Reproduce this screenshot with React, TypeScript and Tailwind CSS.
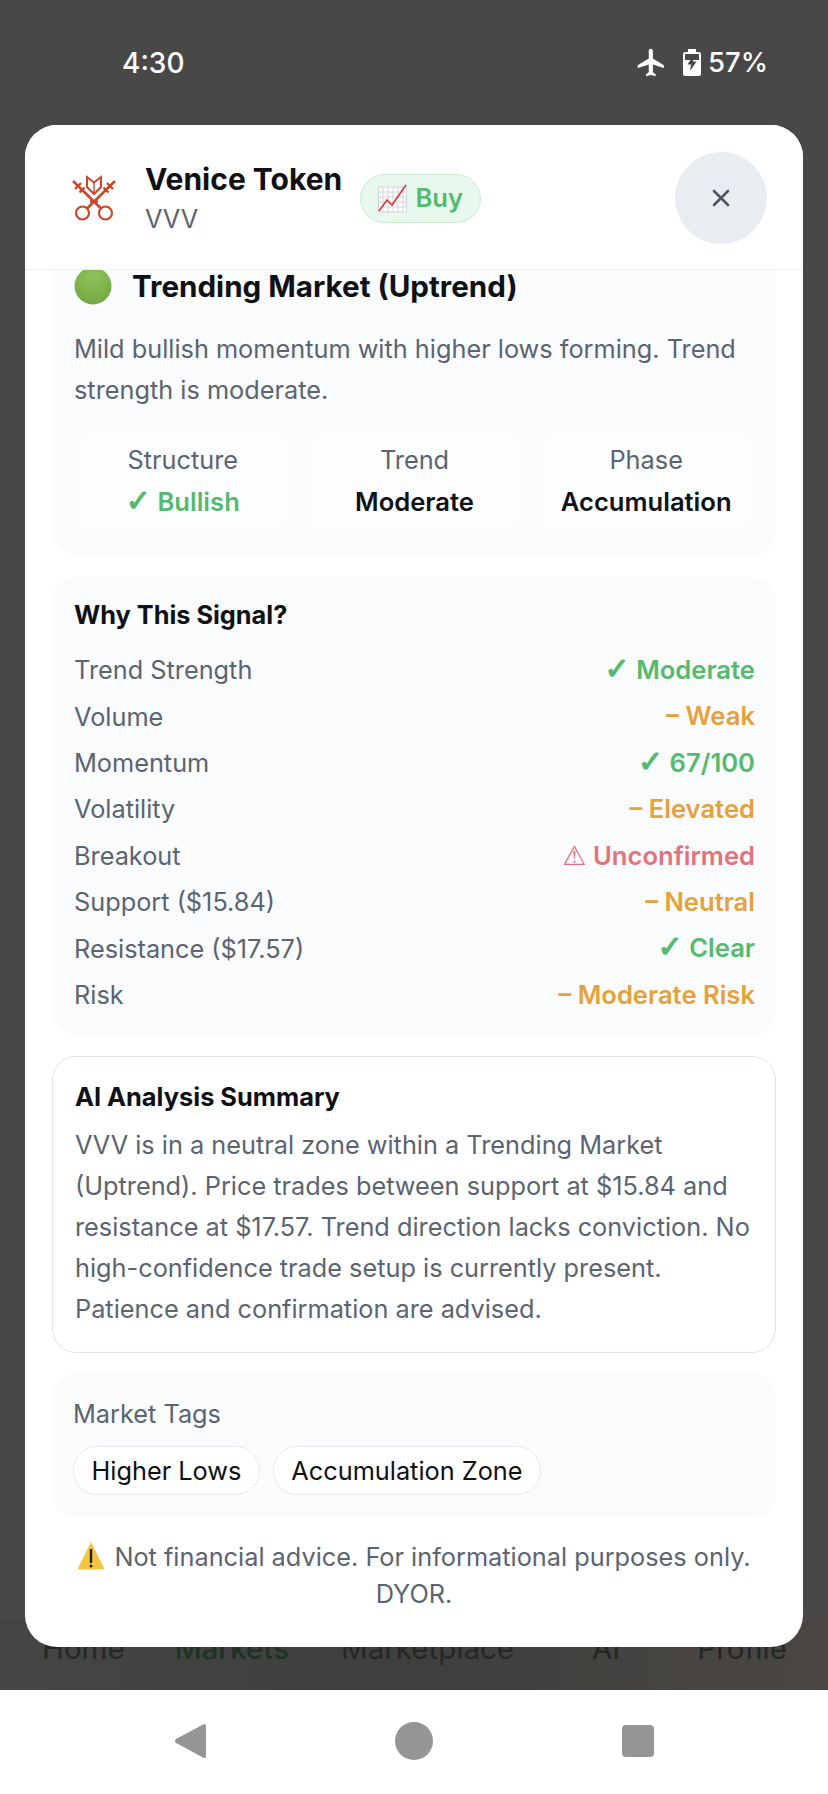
const SIGNALS = [
  { label: "Trend Strength", mark: "✓", value: "Moderate", color: "text-[#56ba6e]" },
  { label: "Volume", mark: "–", value: "Weak", color: "text-[#e3a23c]" },
  { label: "Momentum", mark: "✓", value: "67/100", color: "text-[#56ba6e]" },
  { label: "Volatility", mark: "–", value: "Elevated", color: "text-[#e3a23c]" },
  { label: "Breakout", mark: "⚠", value: "Unconfirmed", color: "text-[#e2727b]" },
  { label: "Support ($15.84)", mark: "–", value: "Neutral", color: "text-[#e3a23c]" },
  { label: "Resistance ($17.57)", mark: "✓", value: "Clear", color: "text-[#56ba6e]" },
  { label: "Risk", mark: "–", value: "Moderate Risk", color: "text-[#e3a23c]" },
];

function KeysLogo() {
  return (
    <svg width="46" height="47" viewBox="0 0 46 47" fill="none" stroke="#c9472a" strokeWidth="2.2">
      {/* bows */}
      <circle cx="11.5" cy="39" r="6.5" />
      <circle cx="34.5" cy="39" r="6.5" />
      {/* shafts */}
      <path d="M2 7 L30 34.5 M44 7 L16 34.5" strokeWidth="2.6" />
      <path d="M19 27.5 H27" strokeWidth="2.4" />
      {/* wards */}
      <path d="M4 15 L10 9 M8.5 18.5 L13.5 13.5" strokeWidth="2.4" />
      <path d="M42 15 L36 9 M37.5 18.5 L32.5 13.5" strokeWidth="2.4" />
      {/* tulip */}
      <path d="M23 20 L16 13 V3 L23 8.5 L30 3 V13 Z" strokeWidth="2" />
      <path d="M23 9 V19" strokeWidth="1.4" />
    </svg>
  );
}

function ChartEmoji() {
  return (
    <svg width="30" height="29" viewBox="0 0 30 29">
      <rect x="0.5" y="3" width="28" height="25" fill="#fbfbfb" stroke="#c9ccd0" strokeWidth="0.8" />
      <path
        d="M5 3V28M10 3V28M15 3V28M20 3V28M25 3V28M0 8H29M0 13H29M0 18H29M0 23H29"
        stroke="#c9ccd0"
        strokeWidth="0.7"
      />
      <path d="M1 27 L9 16 L14 21 L28 1" fill="none" stroke="#d13a45" strokeWidth="1.6" />
    </svg>
  );
}

function GreenDot() {
  return (
    <svg width="38" height="38" viewBox="0 0 38 38" className="shrink-0">
      <defs>
        <radialGradient id="dot" cx="50%" cy="25%" r="75%">
          <stop offset="0%" stopColor="#8fc25a" />
          <stop offset="100%" stopColor="#74a843" />
        </radialGradient>
      </defs>
      <circle cx="19" cy="18" r="18.5" fill="url(#dot)" />
    </svg>
  );
}

function WarningEmoji() {
  return (
    <svg width="28" height="29" viewBox="0 0 28 29" className="inline-block align-[-4px] mr-[9px]">
      <path d="M14 1 L27 27 Q27.5 28.5 26 28.5 H2 Q0.5 28.5 1 27 Z" fill="#f4c542" />
      <path d="M14 9 V21" stroke="#222" strokeWidth="2.4" strokeLinecap="round" />
      <circle cx="14" cy="25" r="1.5" fill="#222" />
    </svg>
  );
}

// check / warning glyphs come from DejaVu, Inter's are too small
function Mark({ children }: { children: string }) {
  if (children === "⚠") {
    return <span className="font-['DejaVu_Sans'] font-normal text-[27px] leading-none">{children}</span>;
  }
  return (
    <span className="font-['DejaVu_Sans'] text-[30px] leading-none [-webkit-text-stroke:1.2px_currentColor]">
      {children}
    </span>
  );
}

export default function App() {
  return (
    <div className="w-[828px] h-[1794px] flex flex-col overflow-hidden bg-[#484849] font-['Inter',sans-serif]">
      {/* Status bar */}
      <div className="h-[125px] pl-[122px] pr-[60px] flex items-center justify-between text-white">
        <span className="text-[28px] font-medium">4:30</span>
        <div className="flex items-center">
          <svg width="33" height="33" viewBox="0 0 24 24" fill="white">
            <path d="M21 16v-2l-8-5V3.5C13 2.67 12.33 2 11.5 2S10 2.67 10 3.5V9l-8 5v2l8-2.5V19l-2 1.5V22l3.5-1 3.5 1v-1.5L13 19v-5.5z" />
          </svg>
          <svg width="18" height="27" viewBox="0 0 18 27" className="ml-[15px]">
            <path d="M5 0h8v3h3a2 2 0 0 1 2 2v20a2 2 0 0 1-2 2H2a2 2 0 0 1-2-2V5a2 2 0 0 1 2-2h3z" fill="white" />
            <rect x="2" y="5" width="14" height="6" fill="#484849" />
            <path d="M10.5 6 L4.5 15.5 H8 L7 22 L13.5 12.5 H10 Z" fill="#484849" />
          </svg>
          <span className="ml-[7px] text-[27.5px] font-medium">57%</span>
        </div>
      </div>

      {/* Modal */}
      <div className="relative z-10 mx-[25px] h-[1522px] shrink-0 rounded-[32px] bg-white flex flex-col overflow-hidden">
        <header className="h-[145px] shrink-0 border-b border-[#eef0f2] bg-white flex items-center pl-[46px] pr-[36px]">
          <KeysLogo />
          <div className="ml-[28px] mt-[1px]">
            <div className="text-[30px] leading-[40px] font-bold text-[#0f1115]">Venice Token</div>
            <div className="text-[25.3px] leading-[36px] mt-[2px] text-[#5b6470]">VVV</div>
          </div>
          <div className="ml-[18px] mt-[3px] h-[49px] w-[121px] rounded-full border border-[#c9ecd3] bg-[#e9f8ed] flex items-center justify-center gap-[7px]">
            <ChartEmoji />
            <span className="text-[25.6px] font-semibold text-[#56ba6e]">Buy</span>
          </div>
          <button className="ml-auto mt-[2px] w-[92px] h-[92px] rounded-full bg-[#e9edf1] flex items-center justify-center">
            <svg width="20" height="20" viewBox="0 0 20 20" stroke="#4b5563" strokeWidth="2.6" strokeLinecap="round">
              <path d="M3 3 L17 17 M17 3 L3 17" />
            </svg>
          </button>
        </header>

        <div className="flex-1 min-h-0 overflow-hidden px-[27px] flex flex-col">
          {/* Market regime */}
          <section className="h-[285px] shrink-0 rounded-b-[24px] bg-[#f9fbfd] pl-[22px] pr-[21px]">
            <div className="flex items-center h-[33px]">
              <GreenDot />
              <h2 className="ml-[20px] text-[29.6px] leading-[33px] font-bold text-[#0f1115] whitespace-nowrap">
                Trending Market (Uptrend)
              </h2>
            </div>
            <p className="mt-[25px] text-[25.3px] leading-[41px] text-[#5b6470]">
              Mild bullish momentum with higher lows forming. Trend strength is moderate.
            </p>
            <div className="mt-[21px] px-[1px] grid grid-cols-3 gap-[16px]">
              <div className="h-[100px] rounded-[20px] bg-[#fcfdfe] flex flex-col items-center justify-center">
                <span className="text-[25.3px] leading-[42px] text-[#5b6470]">Structure</span>
                <span className="text-[25.6px] leading-[42px] font-semibold text-[#56ba6e]">
                  <Mark>✓</Mark> Bullish
                </span>
              </div>
              <div className="h-[100px] rounded-[20px] bg-[#fcfdfe] flex flex-col items-center justify-center">
                <span className="text-[25.3px] leading-[42px] text-[#5b6470]">Trend</span>
                <span className="text-[25.6px] leading-[42px] font-semibold text-[#0f1115]">Moderate</span>
              </div>
              <div className="h-[100px] rounded-[20px] bg-[#fcfdfe] flex flex-col items-center justify-center">
                <span className="text-[25.3px] leading-[42px] text-[#5b6470]">Phase</span>
                <span className="text-[25.6px] leading-[42px] font-semibold text-[#0f1115]">Accumulation</span>
              </div>
            </div>
          </section>

          {/* Why this signal */}
          <section className="mt-[22px] h-[458px] shrink-0 rounded-[24px] bg-[#f9fbfd] pl-[22px] pr-[21px] pt-[18px]">
            <h3 className="text-[25.3px] leading-[40px] font-bold text-[#0f1115]">Why This Signal?</h3>
            <div className="mt-[12px] flex flex-col">
              {SIGNALS.map((row) => (
                <div key={row.label} className="h-[46.4px] flex items-center justify-between text-[25.6px]">
                  <span className="text-[25.3px] text-[#5b6470]">{row.label}</span>
                  <span className={`font-semibold ${row.color}`}>
                    {row.mark === "–" ? row.mark : <Mark>{row.mark}</Mark>} {row.value}
                  </span>
                </div>
              ))}
            </div>
          </section>

          {/* AI summary */}
          <section className="mt-[21px] h-[297px] shrink-0 rounded-[24px] border border-[#dfe4ea] bg-white px-[22px] pt-[20px]">
            <h3 className="text-[25.4px] leading-[40px] font-bold text-[#0f1115]">AI Analysis Summary</h3>
            <p className="mt-[7px] text-[25.3px] leading-[41px] text-[#5b6470]">
              VVV is in a neutral zone within a Trending Market (Uptrend). Price trades between support at $15.84 and
              resistance at $17.57. Trend direction lacks conviction. No high-confidence trade setup is currently
              present. Patience and confirmation are advised.
            </p>
          </section>

          {/* Market tags */}
          <section className="mt-[21px] h-[143px] shrink-0 rounded-[24px] bg-[#f9fbfd] px-[21px] pt-[20px]">
            <div className="text-[25.3px] leading-[40px] text-[#5b6470]">Market Tags</div>
            <div className="mt-[12px] flex gap-[13px]">
              <span className="h-[49px] px-[17.5px] rounded-full border border-[#e6e9ee] bg-white flex items-center text-[25.3px] text-[#0f1115]">
                Higher Lows
              </span>
              <span className="h-[49px] px-[17.5px] rounded-full border border-[#e6e9ee] bg-white flex items-center text-[25.3px] text-[#0f1115]">
                Accumulation Zone
              </span>
            </div>
          </section>

          <p className="mt-[21px] text-center text-[25.3px] leading-[37px] text-[#5b6470]">
            <WarningEmoji />
            Not financial advice. For informational purposes only. DYOR.
          </p>
        </div>
      </div>

      {/* Tab bar peeking out behind the modal */}
      <div className="-mt-[29px] h-[72px] shrink-0 pl-[42px] pb-[12px] flex items-center text-[29.5px] text-[#252626] bg-gradient-to-r from-[#454545] via-[#3f3f3e] to-[#4a4642]">
        <span>Home</span>
        <span className="ml-[50px] font-medium text-[#1d3325]">Markets</span>
        <span className="ml-[52px]">Marketplace</span>
        <span className="ml-[78px]">AI</span>
        <span className="ml-[77px]">Profile</span>
      </div>

      {/* Android nav bar */}
      <nav className="flex-1 bg-white flex items-center pb-[3px]">
        <svg width="32" height="36" viewBox="0 0 32 36" className="ml-[174px]">
          <path d="M29 1.5 Q32 0 32 3 V33 Q32 36 29 34.5 L2 20 Q0 18 2 16 Z" fill="#959595" />
        </svg>
        <div className="ml-[189px] w-[38px] h-[38px] rounded-full bg-[#959595]" />
        <div className="ml-[189px] w-[32px] h-[32px] rounded-[4px] bg-[#959595]" />
      </nav>
    </div>
  );
}
